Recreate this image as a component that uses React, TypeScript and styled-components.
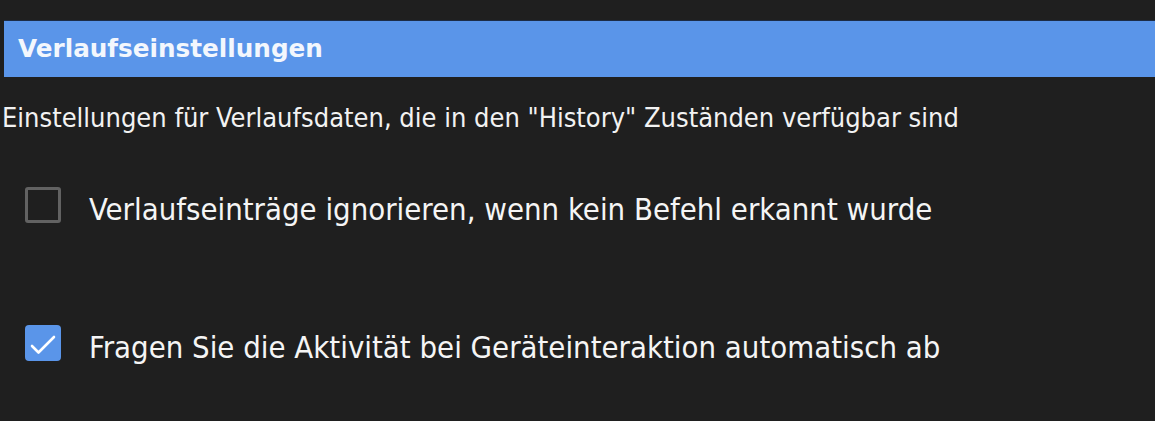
import React from "react";
import styled, { createGlobalStyle } from "styled-components";

const GlobalStyle = createGlobalStyle`
  html, body {
    margin: 0;
    padding: 0;
    background: #1f1f1f;
  }
  body {
    font-family: "DejaVu Sans Condensed", "DejaVu Sans", sans-serif;
    color: #f4f4f4;
  }
`;

const Page = styled.div`
  padding-top: 20px;
  min-height: 401px;
  display: flex;
  flex-direction: column;
`;

const SectionHeader = styled.h2`
  margin: 0 0 0 4px;
  height: 57px;
  box-sizing: border-box;
  padding: 14px 0 0 14px;
  background: #5a95e9;
  border-top: 1px solid #1c2c47;
  font-family: "DejaVu Sans", sans-serif;
  font-weight: bold;
  font-size: 24.7px;
  line-height: 28px;
  color: #f3f7fd;
  letter-spacing: 0;
`;

const Description = styled.p`
  margin: 25px 0 0 2px;
  font-size: 27px;
  line-height: 32px;
  color: #f2f2f2;
  white-space: nowrap;
`;

const OptionList = styled.div`
  margin-top: 53px;
  padding-left: 25px;
  display: flex;
  flex-direction: column;
  gap: 98px;
`;

const OptionRow = styled.label`
  display: flex;
  align-items: flex-start;
  gap: 28px;
  cursor: pointer;
`;

const Box = styled.span<{ $checked: boolean }>`
  flex: 0 0 auto;
  width: 36px;
  height: 36px;
  box-sizing: border-box;
  border-radius: ${(p) => (p.$checked ? "4px" : "3px")};
  border: ${(p) => (p.$checked ? "none" : "3px solid #626262")};
  background: ${(p) => (p.$checked ? "#5a95e9" : "transparent")};
  display: flex;
  align-items: center;
  justify-content: center;
`;

const OptionText = styled.span`
  margin-top: 4px;
  font-size: 30.8px;
  line-height: 36px;
  color: #f5f5f5;
  white-space: nowrap;
`;

const CheckMark = () => (
  <svg width="36" height="36" viewBox="0 0 36 36" aria-hidden="true">
    <polyline
      points="7,21 13.5,27.5 29,12"
      fill="none"
      stroke="#ffffff"
      strokeWidth="2.6"
      strokeLinecap="round"
      strokeLinejoin="round"
    />
  </svg>
);

const Option = ({ checked, text }: { checked: boolean; text: string }) => (
  <OptionRow>
    <Box $checked={checked} role="checkbox" aria-checked={checked}>
      {checked && <CheckMark />}
    </Box>
    <OptionText>{text}</OptionText>
  </OptionRow>
);

export default function App() {
  return (
    <>
      <GlobalStyle />
      <Page>
        <SectionHeader>Verlaufseinstellungen</SectionHeader>
        <Description>
          Einstellungen für Verlaufsdaten, die in den "History" Zuständen verfügbar sind
        </Description>
        <OptionList>
          <Option checked={false} text="Verlaufseinträge ignorieren, wenn kein Befehl erkannt wurde" />
          <Option checked={true} text="Fragen Sie die Aktivität bei Geräteinteraktion automatisch ab" />
        </OptionList>
      </Page>
    </>
  );
}
